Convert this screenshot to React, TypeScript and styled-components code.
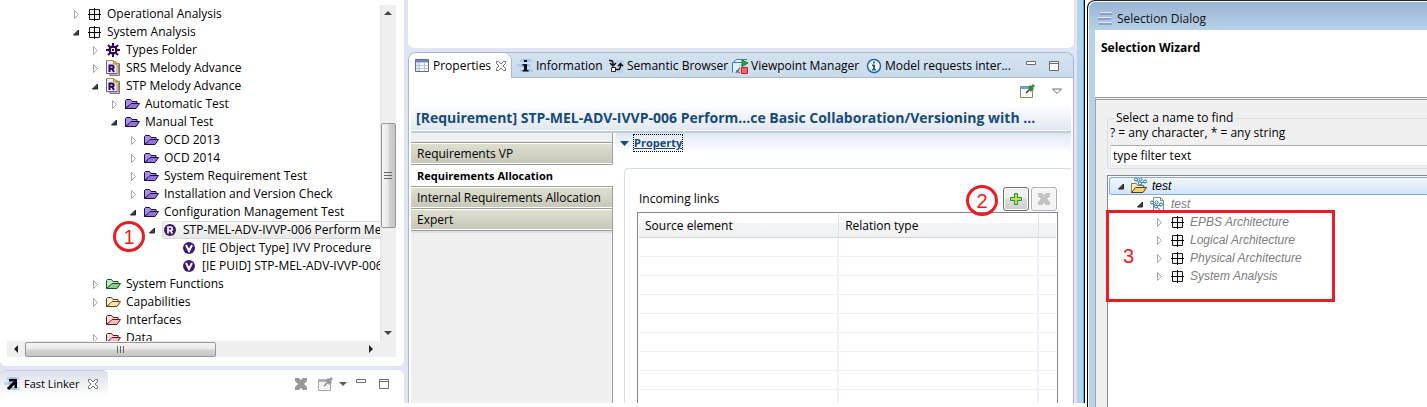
import React from "react";
import styled, { createGlobalStyle, css } from "styled-components";

const GlobalStyle = createGlobalStyle`
  *, *::before, *::after { box-sizing: border-box; }
  html, body { margin: 0; padding: 0; background: #fff; }
  body, button, input, table {
    font-family: "Open Sans", "Noto Sans", sans-serif;
    font-size: 12px;
    line-height: 18px;
    color: #000;
  }
  button { background: none; border: 0; padding: 0; margin: 0; }
  svg { display: block; flex: none; }
`;

const RED = "#ed1c24";
const LAVENDER = "#e0e5f5";

/* ---------- page frame ---------- */

const Page = styled.div`
  display: grid;
  grid-template-columns: minmax(0, 408fr) minmax(0, 679fr) minmax(0, 340fr);
  height: 100vh;
  overflow: hidden;
`;

const LeftColumn = styled.div`
  position: relative;
  display: flex;
  flex-direction: column;
  gap: 4px;
  min-height: 0;
  margin-bottom: 4px;
  padding-right: 4px;
  background: ${LAVENDER};
`;

const MiddleColumn = styled.div`
  display: flex;
  min-width: 0;
  min-height: 0;
  margin-bottom: 4px;
`;

const Workbench = styled.div`
  flex: 1;
  display: flex;
  flex-direction: column;
  gap: 4px;
  min-width: 0;
  min-height: 0;
  padding-right: 3px;
  background: ${LAVENDER};
`;

const WindowEdge = styled.div`
  flex: none;
  width: 10px;
  border-left: 6px solid #b9d1ea;
  background: linear-gradient(90deg, #35c3ea 1px, #000 1px 2px, #fff 2px);
`;

/* ---------- project tree ---------- */

const TreeCard = styled.section`
  flex: 1;
  display: flex;
  flex-direction: column;
  min-height: 0;
  padding: 5px 8px 9px 0;
  background: #fff;
  border-radius: 0 0 6px 6px;
`;

const TreeBody = styled.div`
  flex: 1;
  display: flex;
  min-height: 0;
`;

const TreeList = styled.ul`
  flex: 1;
  min-width: 0;
  min-height: 0;
  margin: 0;
  padding: 0;
  overflow: hidden;
  list-style: none;
`;

const TreeRow = styled.li<{ $level: number }>`
  display: flex;
  align-items: center;
  height: 18px;
  padding-left: ${(p) => 72 + p.$level * 19}px;
  white-space: nowrap;
`;

const Twisty = styled.button`
  flex: none;
  width: 14px;
  height: 16px;
`;

const NodeBody = styled.span<{ $selected?: boolean }>`
  flex: 1;
  display: flex;
  align-items: center;
  gap: 5px;
  height: 18px;
  ${(p) =>
    p.$selected &&
    css`
      box-shadow: inset 1px 0 #d9d9d9, inset 0 1px #d9d9d9, inset 0 -1px #d9d9d9;
      border-radius: 3px 0 0 3px;
      background: linear-gradient(#fafafa, #e6e6e6);
    `}
`;

const VScroll = styled.div`
  flex: none;
  display: flex;
  flex-direction: column;
  align-items: center;
  width: 16px;
  background: linear-gradient(90deg, #e4e4e4, #f0f0f0 3px);
`;

const VSpace = styled.div<{ $grow: number }>`
  flex: ${(p) => p.$grow} 1 0;
`;

const VThumb = styled.div`
  flex: 104 1 0;
  display: flex;
  align-items: center;
  justify-content: center;
  width: 15px;
  border: 1px solid #979797;
  border-radius: 2px;
  background: linear-gradient(90deg, #f5f5f5, #e9e9eb 45%, #d3d3d5 55%, #c5c5c8);
`;

const HScroll = styled.div`
  flex: none;
  display: flex;
  align-items: center;
  height: 16px;
  margin: 0 0 0 7px;
  padding-right: 16px;
  background: #f0f0f0;
`;

const HThumb = styled.div`
  flex: 191 1 0;
  display: flex;
  align-items: center;
  justify-content: center;
  height: 15px;
  border: 1px solid #979797;
  border-radius: 2px;
  background: linear-gradient(#f5f5f5, #e9e9eb 45%, #d3d3d5 55%, #c5c5c8);
`;

const HTrack = styled.div`
  flex: 147 1 0;
`;

const ScrollArrow = styled.button`
  flex: none;
  display: flex;
  align-items: center;
  justify-content: center;
  width: 18px;
  height: 16px;
`;

/* ---------- fast linker ---------- */

const LinkerCard = styled.section`
  flex: none;
  display: flex;
  align-items: flex-start;
  justify-content: space-between;
  height: 33px;
  background: #fff;
  border-radius: 6px 6px 0 0;
`;

const LinkerTab = styled.div`
  display: flex;
  align-items: center;
  gap: 4px;
  height: 27px;
  padding: 0 6px 0 4px;
  border-top: 1px solid #c9cddb;
  border-radius: 6px 6px 0 0;
  font-size: 11px;
  background: linear-gradient(#dde1ec, #fff);
`;

const LinkerTools = styled.div`
  display: flex;
  align-items: center;
  height: 27px;
  padding-right: 9px;
`;

const IconButton = styled.button<{ $w?: number }>`
  display: flex;
  align-items: center;
  justify-content: center;
  width: ${(p) => p.$w ?? 16}px;
  height: 16px;
`;

/* ---------- properties view ---------- */

const EditorStub = styled.div`
  flex: none;
  height: 48px;
  background: #fff;
  border-radius: 0 0 6px 6px;
`;

const Folder = styled.section`
  flex: 1;
  display: flex;
  flex-direction: column;
  min-height: 0;
  border: 1px solid #b0b5c8;
  border-bottom: 0;
  border-radius: 8px 8px 0 0;
  background: #fff;
  overflow: hidden;
`;

const TabBar = styled.div`
  flex: none;
  display: flex;
  height: 25px;
  background: linear-gradient(#d3e2f0, #c9dbeb);
  box-shadow: inset 0 -1px #b0b5c8;
`;

const ViewTab = styled.button<{ $active?: boolean; $w: number }>`
  flex: 0 1 ${(p) => p.$w}px;
  display: flex;
  align-items: center;
  gap: 3px;
  min-width: 0;
  height: 25px;
  padding-left: 5px;
  white-space: nowrap;
  text-align: left;
  ${(p) =>
    p.$active &&
    css`
      background: #fff;
      border-right: 1px solid #b0b5c8;
      border-radius: 0 8px 0 0;
    `}
`;

const TabTools = styled.div`
  display: flex;
  align-items: center;
  gap: 7px;
  margin-left: auto;
  padding-right: 11px;
  height: 25px;
`;

const ViewToolbar = styled.div`
  flex: none;
  display: flex;
  align-items: center;
  justify-content: flex-end;
  gap: 14px;
  height: 26px;
  padding-right: 8px;
`;

const TitleBar = styled.h1`
  flex: none;
  margin: 0 2px;
  padding-left: 5px;
  height: 27px;
  overflow: hidden;
  white-space: nowrap;
  font-size: 14px;
  font-weight: 700;
  line-height: 27px;
  color: #174a7c;
  background: linear-gradient(#fff, #e1e8f2);
  border-bottom: 1px solid #fff;
`;

const Content = styled.div`
  flex: 1;
  display: flex;
  min-height: 0;
  margin: 0 2px;
  border-top: 2px solid #b8cde0;
`;

const SideTabs = styled.nav`
  flex: none;
  display: flex;
  flex-direction: column;
  width: 202px;
  padding-top: 9px;
  background: linear-gradient(#9c9c9c, #9c9c9c) right / 1px 100% no-repeat #f0f0f0;
`;

const SideTab = styled.button<{ $active?: boolean }>`
  height: 22px;
  padding: 0 6px;
  text-align: left;
  white-space: nowrap;
  border-top: 1px solid #9c9c9c;
  border-right: 1px solid #9c9c9c;
  background: linear-gradient(#dfe0d0, #c6c7b8);
  background-clip: padding-box;
  box-shadow: inset 0 1px #fff, inset 0 -1px #fff;
  ${(p) =>
    p.$active &&
    css`
      background: #fff;
      border-right-color: #fff;
      font-size: 11px;
      font-weight: 700;
    `}
`;

const SideEnd = styled.div`
  height: 3px;
  margin-right: 1px;
  border-top: 1px solid #9c9c9c;
  background: #e0e0e0;
`;

const Pane = styled.div`
  flex: 1;
  display: flex;
  flex-direction: column;
  min-width: 0;
  padding-left: 2px;
`;

const SectionHead = styled.div`
  flex: none;
  display: flex;
  align-items: flex-start;
  height: 20px;
  padding: 2px 0 0 5px;
  border-radius: 4px 0 0 0;
  background: linear-gradient(#dfe8f2, #fff);
`;

const SectionToggle = styled.button`
  display: flex;
  align-items: center;
  gap: 5px;
  height: 16px;
`;

const SectionTitle = styled.span`
  height: 16px;
  line-height: 16px;
  font-size: 11px;
  font-weight: 700;
  color: #174a7c;
  text-decoration: underline;
  outline: 1px dotted #000;
`;

const LinksGroup = styled.div`
  flex: 1;
  display: flex;
  flex-direction: column;
  min-height: 0;
  margin: 15px 0 0 9px;
  padding: 18px 13px 0 12px;
  border: 1px solid #d5dfe8;
  border-width: 1px 0 0 1px;
  border-radius: 4px 0 0 0;
`;

const LinksHead = styled.div`
  position: relative;
  display: flex;
  align-items: center;
  gap: 2px;
  height: 25px;
  padding: 0 1px 1px 2px;
`;

const LinksLabel = styled.span`
  flex: 1;
  line-height: 24px;
  height: 24px;
`;

const PushButton = styled.button`
  display: flex;
  align-items: center;
  justify-content: center;
  width: 26px;
  height: 24px;
  border: 1px solid #707070;
  border-radius: 3px;
  background: linear-gradient(#f3f3f3, #ebebeb 50%, #dcdcdc 50%, #cfcfcf);
  box-shadow: inset 0 0 0 1px #fafafa;
  &:disabled {
    border-color: #adb2b5;
    background: #f4f4f4;
  }
`;

const TableFrame = styled.div`
  flex: 1;
  min-height: 0;
  overflow: hidden;
  padding: 1px 1px 0;
  border: 1px solid #828790;
  border-bottom: 0;
`;

const LinksTable = styled.table`
  width: 100%;
  border-collapse: separate;
  border-spacing: 0;
  table-layout: fixed;
  th {
    height: 24px;
    padding: 0 6px;
    text-align: left;
    font-weight: 400;
    background: linear-gradient(#fff 40%, #f3f4f6 40%, #f0f1f3);
    border-bottom: 1px solid #d5d5d5;
    border-right: 1px solid #dfe3e8;
  }
  td {
    height: 19px;
    padding: 0;
    border-bottom: 1px solid #f0f0f0;
    border-right: 2px solid #ebf2fb;
  }
  tr > :last-child { border-right: 0; }
`;

/* ---------- selection dialog ---------- */

const Dialog = styled.section`
  position: relative;
  display: flex;
  flex-direction: column;
  min-width: 0;
  min-height: 0;
  border-top: 1px solid #222;
  border-left: 1px solid #000;
  border-radius: 8px 0 0 0;
  background: #b9d1ea;
  box-shadow: inset 1px 1px #fff;
`;

const DialogTitle = styled.header`
  flex: none;
  display: flex;
  align-items: center;
  gap: 4px;
  height: 28px;
  margin: 1px 0 0 1px;
  padding: 6px 0 0 8px;
  border-radius: 7px 0 0 0;
  color: #111;
  background: linear-gradient(#98b3d2, #b9d1ea);
`;

const WizardHead = styled.h2`
  flex: none;
  height: 67px;
  margin: 0 0 0 7px;
  padding: 9px 6px;
  font-size: 12px;
  line-height: 18px;
  font-weight: 700;
  background: #fff;
`;

const DialogBody = styled.div`
  flex: 1;
  display: flex;
  flex-direction: column;
  min-height: 0;
  margin-left: 7px;
  padding: 11px 0 0 11px;
  border-top: 3px double #9c9ca4;
  border-left: 1px solid #a0a0a8;
  background: #f0f0f0;
`;

const FilterGroup = styled.fieldset`
  flex: none;
  min-width: 0;
  margin: 0 0 6px;
  padding: 0 0 2px 2px;
  border: 1px solid #d5dfe5;
  border-right: 0;
  border-radius: 4px 0 0 4px;
  legend {
    height: 14px;
    line-height: 14px;
    margin-left: 4px;
    padding: 0 2px;
  }
`;

const FilterHint = styled.label`
  display: block;
  height: 20px;
  line-height: 16px;
`;

const FilterInput = styled.input`
  display: block;
  width: 100%;
  height: 21px;
  padding: 0 2px;
  border: 1px solid #e2e9ef;
  border-top-color: #abadb3;
  border-right: 0;
  background: #fff;
`;

const ResultTree = styled.ul`
  flex: 1;
  min-height: 0;
  margin: 0;
  padding: 1px 0 0 1px;
  overflow: hidden;
  list-style: none;
  border: 1px solid #828790;
  border-width: 1px 0 0 1px;
  background: #fff;
`;

const ResultRow = styled.li<{ $level: number; $selected?: boolean; $muted?: boolean }>`
  display: flex;
  align-items: center;
  height: 18px;
  padding-left: ${(p) => 8 + p.$level * 19}px;
  white-space: nowrap;
  font-style: italic;
  font-family: "Liberation Sans", Arial, sans-serif;
  color: ${(p) => (p.$muted ? "#7d7d7d" : "#000")};
  ${(p) =>
    p.$selected &&
    css`
      border-radius: 3px 0 0 3px;
      background: linear-gradient(#f3f8fe, #cfe3fb);
      box-shadow: inset 1px 1px #84acdd, inset 0 -1px #84acdd;
    `}
`;

/* ---------- call-outs ---------- */

const Circle = styled.span<{ $x: string; $y: number }>`
  position: absolute;
  left: ${(p) => p.$x};
  top: ${(p) => p.$y}px;
  display: flex;
  align-items: center;
  justify-content: center;
  width: 32px;
  height: 31px;
  border: 3px solid ${RED};
  border-radius: 50%;
  font: 20px/24px "Liberation Sans", Arial, sans-serif;
  color: ${RED};
`;

const Frame = styled.div`
  position: absolute;
  left: 18px;
  top: 209px;
  width: 229px;
  height: 92px;
  padding: 31px 0 0 14px;
  border: 3px solid ${RED};
  font: 20px/24px "Liberation Sans", Arial, sans-serif;
  color: ${RED};
  pointer-events: none;
`;

/* ---------- icons ---------- */

const Svg = ({ w = 16, h = 16, children }: { w?: number; h?: number; children: React.ReactNode }) => (
  <svg width={w} height={h} viewBox={`0 0 ${w} ${h}`} aria-hidden="true">
    {children}
  </svg>
);

const Arrow = ({ open }: { open: boolean }) => (
  <Svg>
    {open ? (
      <path d="M6.500 6v5h-5z" fill="#404040" stroke="#222" />
    ) : (
      <path d="M2.500 4.500v8l4-4z" fill="#fff" stroke="#a6a6a6" />
    )}
  </Svg>
);

const ArchIcon = () => (
  <Svg>
    <path d="M3.500 3.500h10v10h-10z" fill="#f2f2f2" stroke="#1c1c1c" />
    <path d="M8.500 2v13M2 8.500h13" fill="none" stroke="#000" />
  </Svg>
);

const GearIcon = () => (
  <Svg>
    <g stroke="#2f0a5c" strokeWidth="2">
      <path d="M8 1v14M1 8h14M3 3l10 10M13 3L3 13" />
    </g>
    <circle cx="8" cy="8" r="4.600" fill="#2f0a5c" />
    <path d="M6.500 6.500h3v3h-3z" fill="none" stroke="#fff" />
  </Svg>
);

const ModuleIcon = () => (
  <Svg>
    <path d="M5 3.500h9.500v12H5z" fill="#efe8d8" stroke="#7b6fa5" />
    <path d="M3.500 2h8l2 2.500V14h-10z" fill="#f5eeda" stroke="#a58b52" />
    <path d="M1.500.5h7l3.500 3.500v9.500H1.500z" fill="#f0ecf8" stroke="#b5913a" />
    <path d="M1.500 1v12.500H12" fill="none" stroke="#6a5aa0" />
    <path d="M8.500.5v3.500H12z" fill="#f3c95a" stroke="#b5913a" />
    <path d="M4.500 12V5.500h2.500a1.500 1.500 0 0 1 0 3.300H5M7 8.800l2 3.200" fill="none" stroke="#2f0a5c" strokeWidth="2" />
  </Svg>
);

const folderColors = {
  purple: ["#9472d6", "#a98ee2", "#160a4a"],
  green: ["#8ccb8c", "#c3e8c3", "#1c4a22"],
  yellow: ["#f6e3a6", "#fbf3d4", "#5a4214"],
  red: ["#eec0c0", "#f8dede", "#6d0f14"],
};
type FolderColor = keyof typeof folderColors;

const FolderIcon = ({ color }: { color: FolderColor }) => {
  const [front, back, line] = folderColors[color];
  return (
    <Svg>
      <path d="M1.500 12.500v-8l1-1h4l1.500 2h5v2.500" fill={back} stroke={line} />
      <path d="M1.500 12.500L5 9.500l2-2h8.500l-3.500 5z" fill={front} stroke={line} />
    </Svg>
  );
};

const BallIcon = ({ kind }: { kind: "R" | "V" }) => (
  <Svg>
    <circle cx="8" cy="8" r="6" fill="#3f1a6e" />
    {kind === "R" ? (
      <path d="M6 11.500V5h2.500a1.700 1.700 0 0 1 0 3.500H6M8.500 8.500l1.800 3" fill="none" stroke="#fff" strokeWidth="1.600" />
    ) : (
      <path d="M5 5l3 6 3-6" fill="none" stroke="#fff" strokeWidth="2" />
    )}
  </Svg>
);

const CloseIcon = () => (
  <Svg w={12} h={12}>
    <path
      d="M1.500 1.500h2l2.500 2.500 2.500-2.500h2v2L8 6l2.500 2.500v2h-2L6 8l-2.500 2.500h-2v-2L4 6 1.500 3.500z"
      fill="#fff"
      stroke="#6f6f6f"
    />
  </Svg>
);

const CrossIcon = ({ color }: { color: string }) => (
  <Svg w={14} h={14}>
    <path d="M1 1h4l2 2 2-2h4v3l-3 3 3 3v3H9l-2-2-2 2H1v-3l3-3-3-3z" fill={color} />
  </Svg>
);

const Stripes = () => (
  <>
    <path d="M3 2.500h12M0 7.500h14M3 12.500h13" stroke="#9fc0ee" strokeWidth="3" opacity=".55" />
    <path d="M6 2.500h6M4 7.500h8M7 12.500h6" stroke="#6f9fe4" strokeWidth="2" opacity=".5" />
  </>
);

const LinkerIcon = () => (
  <Svg>
    <Stripes />
    <path d="M4 13l7-7" stroke="#000" strokeWidth="3" />
    <path d="M5 3h8v9h-2.500V5.500H5z" fill="#000" />
  </Svg>
);

const InfoBarsIcon = () => (
  <Svg>
    <Stripes />
    <path d="M7 2h3v2H7zM5.500 6H10v6h1.500v1.500h-6V12H7V7.500H5.500z" fill="#111" />
  </Svg>
);

const SemanticIcon = () => (
  <Svg>
    <path d="M8 3.500h8M9 8.500h7M9 13.500h6" stroke="#a9c6f0" strokeWidth="2.500" opacity=".7" />
    <path d="M1 2.500c4-.5 4 1 4 4M2 5l3 3 3-3" fill="none" stroke="#111" strokeWidth="1.500" />
    <path d="M8 11.500h2.500c1.500 0 2-1 2-5M10 8l2.500-2.500L15 8" fill="none" stroke="#111" strokeWidth="1.500" />
    <path d="M3.500 9.500h4v4h-4z" fill="#fff" stroke="#222" />
  </Svg>
);

const ViewpointIcon = () => (
  <Svg>
    <path d="M1 5l4-3h8v4H7v8H1z" fill="#e4f1fa" />
    <path d="M.5 14.500V5l4-3.500H15M.5 4.500h9" fill="none" stroke="#2f7fbf" />
    <path d="M10 2l6 3-6 3.500z" fill="#2fa43a" stroke="#1b7a26" />
    <path d="M9.500 9.500h6v6h-6z" fill="#ee6666" stroke="#c22323" />
    <path d="M4 15l4-5M4 12.500l4 2.500" stroke="#777" strokeWidth="1.500" />
  </Svg>
);

const InfoIcon = () => (
  <Svg>
    <circle cx="8" cy="8" r="6.500" fill="#fff" stroke="#1c68a8" strokeWidth="1.500" />
    <path d="M7 3.500h2v2H7zM6 6.500h3v4.500h1v1.500H6V11h1V8H6z" fill="#1c5f9c" />
  </Svg>
);

const TableIcon = () => (
  <Svg>
    <path d="M1.500 1.500h13v12h-13z" fill="#fff" stroke="#5a6f94" />
    <path d="M2 2h12v2.500H2z" fill="#6f86ae" />
    <path d="M2 5h3.500v8H2z" fill="#dce4f2" />
    <path d="M2 7.500h12M2 10.500h12M5.500 4.500V13M10.500 4.500V13" stroke="#b9c3d8" />
  </Svg>
);

const MinIcon = () => (
  <Svg w={12} h={12}>
    <path d="M1.500 1.500h9v3h-9z" fill="#fff" stroke="#6b6b6b" />
  </Svg>
);

const MaxIcon = () => (
  <Svg w={12} h={12}>
    <path d="M1.500 1.500h9v9h-9zM1 3.500h10" fill="#fff" stroke="#6b6b6b" />
  </Svg>
);

const PinIcon = ({ muted }: { muted?: boolean }) => (
  <Svg>
    <path d="M1.500 3.500h12v11h-12z" fill={muted ? "#f4f4f4" : "#fffef4"} stroke={muted ? "#a5a5a5" : "#93875d"} />
    <path d="M1 3h9v3H1z" fill={muted ? "#b0b0b0" : "#6d9fe0"} />
    <path d="M7 10l4-4" stroke={muted ? "#888" : "#333"} strokeWidth="1.500" />
    <path d="M9 4l2-2 1 1 2-2 2 2-2 2 1 1-3 3z" fill={muted ? "#999" : "#2f8f3f"} />
  </Svg>
);

const PlusIcon = () => (
  <Svg w={14} h={14}>
    <path d="M5.500 1.500h3v4h4v3h-4v4h-3v-4h-4v-3h4z" fill="#c5dc4c" stroke="#2f8a4c" />
  </Svg>
);

const dots = (
  <g fill="#fff" stroke="#1d6fa8">
    <path d="M3 2.500l4 4 5-2M7 6.500l4 3" fill="none" />
    <circle cx="3" cy="2.500" r="1.500" />
    <circle cx="7" cy="6.500" r="1.500" />
    <circle cx="7.500" cy="2.500" r="1.500" />
    <circle cx="12" cy="4.500" r="1.500" />
  </g>
);

const ProjectIcon = () => (
  <Svg>
    <path d="M.5 14.500V5.500h5l1 2H13v2" fill="#fdf0c0" stroke="#9a7a20" />
    <path d="M.5 14.500l4-5h11l-3.500 5z" fill="#f4cf6a" stroke="#4a3a10" />
    <g transform="translate(2 -1)">{dots}</g>
  </Svg>
);

const ModelIcon = () => (
  <Svg>
    <path d="M3.500 1.500h7l3 3v10h-10z" fill="#fff" stroke="#8a8a8a" />
    <path d="M10.500 1.500v3h3" fill="none" stroke="#8a8a8a" />
    <g transform="translate(-1 4)">{dots}</g>
  </Svg>
);

const DialogIcon = () => (
  <Svg>
    <path d="M3 2.500h12M1 7.500h13M2 12.500h13" stroke="#dfe7f6" strokeWidth="3" />
    <path d="M3 3h12M1 8h13M2 13h13" stroke="#7a8cb8" strokeWidth="2" opacity=".8" />
  </Svg>
);

/* ---------- data ---------- */

type Node = {
  label: string;
  level: number;
  icon: React.ReactNode;
  open?: boolean;
  selected?: boolean;
};

const folder = (color: FolderColor) => <FolderIcon color={color} />;

const nodes: Node[] = [
  { label: "Operational Analysis", level: 0, icon: <ArchIcon />, open: false },
  { label: "System Analysis", level: 0, icon: <ArchIcon />, open: true },
  { label: "Types Folder", level: 1, icon: <GearIcon />, open: false },
  { label: "SRS Melody Advance", level: 1, icon: <ModuleIcon />, open: false },
  { label: "STP Melody Advance", level: 1, icon: <ModuleIcon />, open: true },
  { label: "Automatic Test", level: 2, icon: folder("purple"), open: false },
  { label: "Manual Test", level: 2, icon: folder("purple"), open: true },
  { label: "OCD 2013", level: 3, icon: folder("purple"), open: false },
  { label: "OCD 2014", level: 3, icon: folder("purple"), open: false },
  { label: "System Requirement Test", level: 3, icon: folder("purple"), open: false },
  { label: "Installation and Version Check", level: 3, icon: folder("purple"), open: false },
  { label: "Configuration Management Test", level: 3, icon: folder("purple"), open: true },
  { label: "STP-MEL-ADV-IVVP-006 Perform Mel", level: 4, icon: <BallIcon kind="R" />, open: true, selected: true },
  { label: "[IE Object Type] IVV Procedure", level: 5, icon: <BallIcon kind="V" /> },
  { label: "[IE PUID] STP-MEL-ADV-IVVP-006", level: 5, icon: <BallIcon kind="V" /> },
  { label: "System Functions", level: 1, icon: folder("green"), open: false },
  { label: "Capabilities", level: 1, icon: folder("yellow"), open: false },
  { label: "Interfaces", level: 1, icon: folder("red") },
  { label: "Data", level: 1, icon: folder("red"), open: false },
];

const results: Node[] = [
  { label: "test", level: 0, icon: <ProjectIcon />, open: true, selected: true },
  { label: "test", level: 1, icon: <ModelIcon />, open: true },
  { label: "EPBS Architecture", level: 2, icon: <ArchIcon />, open: false },
  { label: "Logical Architecture", level: 2, icon: <ArchIcon />, open: false },
  { label: "Physical Architecture", level: 2, icon: <ArchIcon />, open: false },
  { label: "System Analysis", level: 2, icon: <ArchIcon />, open: false },
];

const viewTabs = [
  { label: "Properties", icon: <TableIcon />, w: 103, active: true },
  { label: "Information", icon: <InfoBarsIcon />, w: 91 },
  { label: "Semantic Browser", icon: <SemanticIcon />, w: 124 },
  { label: "Viewpoint Manager", icon: <ViewpointIcon />, w: 134 },
  { label: "Model requests inter...", icon: <InfoIcon />, w: 150 },
];

const sideTabs = ["Requirements VP", "Requirements Allocation", "Internal Requirements Allocation", "Expert"];

const NodeTwisty = ({ open }: { open?: boolean }) =>
  open === undefined ? (
    <Twisty as="span" />
  ) : (
    <Twisty aria-label={open ? "Collapse" : "Expand"}>
      <Arrow open={open} />
    </Twisty>
  );

/* ---------- parts ---------- */

const ProjectTree = () => (
  <TreeCard>
    <TreeBody>
      <TreeList role="tree" aria-label="Project">
        {nodes.map((n) => (
          <TreeRow key={n.label} $level={n.level} role="treeitem" aria-selected={!!n.selected}>
            <NodeTwisty open={n.open} />
            <NodeBody $selected={n.selected}>
              {n.icon}
              {n.label}
            </NodeBody>
          </TreeRow>
        ))}
      </TreeList>
      <VScroll>
        <ScrollArrow aria-label="Scroll up">
          <Svg w={8} h={4}><path d="M0 4l4-4 4 4z" fill="#444" /></Svg>
        </ScrollArrow>
        <VSpace $grow={102} />
        <VThumb>
          <Svg w={8} h={9}><path d="M0 1.500h8M0 4.500h8M0 7.500h8" stroke="#666" /></Svg>
        </VThumb>
        <VSpace $grow={97} />
        <ScrollArrow aria-label="Scroll down">
          <Svg w={8} h={4}><path d="M0 0l4 4 4-4z" fill="#444" /></Svg>
        </ScrollArrow>
      </VScroll>
    </TreeBody>
    <HScroll>
      <ScrollArrow aria-label="Scroll left">
        <Svg w={4} h={8}><path d="M4 0L0 4l4 4z" fill="#222" /></Svg>
      </ScrollArrow>
      <HThumb>
        <Svg w={9} h={7}><path d="M1.500 0v7M4.500 0v7M7.500 0v7" stroke="#666" /></Svg>
      </HThumb>
      <HTrack />
      <ScrollArrow aria-label="Scroll right">
        <Svg w={4} h={8}><path d="M0 0l4 4-4 4z" fill="#222" /></Svg>
      </ScrollArrow>
    </HScroll>
  </TreeCard>
);

const FastLinker = () => (
  <LinkerCard>
    <LinkerTab>
      <LinkerIcon />
      Fast Linker
      <IconButton $w={18} aria-label="Close Fast Linker"><CloseIcon /></IconButton>
    </LinkerTab>
    <LinkerTools>
      <IconButton $w={24} aria-label="Clear"><CrossIcon color="#989898" /></IconButton>
      <IconButton $w={24} aria-label="Pin"><PinIcon muted /></IconButton>
      <IconButton $w={12} aria-label="Menu">
        <Svg w={8} h={4}><path d="M0 0h8L4 4z" fill="#5c5c5c" /></Svg>
      </IconButton>
      <IconButton $w={24} aria-label="Minimize"><MinIcon /></IconButton>
      <IconButton $w={22} aria-label="Maximize"><MaxIcon /></IconButton>
    </LinkerTools>
  </LinkerCard>
);

const PropertiesView = () => (
  <Folder>
    <TabBar role="tablist">
      {viewTabs.map((t) => (
        <ViewTab key={t.label} role="tab" aria-selected={!!t.active} $active={t.active} $w={t.w}>
          {t.icon}
          {t.label}
          {t.active && <IconButton as="span" $w={14}><CloseIcon /></IconButton>}
        </ViewTab>
      ))}
      <TabTools>
        <IconButton aria-label="Minimize"><MinIcon /></IconButton>
        <IconButton aria-label="Maximize"><MaxIcon /></IconButton>
      </TabTools>
    </TabBar>
    <ViewToolbar>
      <IconButton aria-label="Pin view"><PinIcon /></IconButton>
      <IconButton aria-label="View menu">
        <Svg w={12} h={7}><path d="M1.500 1h9L6 5.500z" fill="#fff" stroke="#666" /></Svg>
      </IconButton>
    </ViewToolbar>
    <TitleBar>
      [Requirement] STP-MEL-ADV-IVVP-006 Perform...ce Basic Collaboration/Versioning with ...
    </TitleBar>
    <Content>
      <SideTabs>
        {sideTabs.map((label, i) => (
          <SideTab key={label} $active={i === 1}>{label}</SideTab>
        ))}
        <SideEnd />
      </SideTabs>
      <Pane>
        <SectionHead>
          <SectionToggle aria-expanded="true">
            <Svg w={9} h={5}><path d="M0 0h9L4.500 5z" fill="#174a7c" /></Svg>
            <SectionTitle>Property</SectionTitle>
          </SectionToggle>
        </SectionHead>
        <LinksGroup>
          <LinksHead>
            <LinksLabel>Incoming links</LinksLabel>
            <PushButton aria-label="Add link"><PlusIcon /></PushButton>
            <PushButton aria-label="Remove link" disabled><CrossIcon color="#c3c3c3" /></PushButton>
            <Circle $x="calc(100% - 92px)" $y={-2}>2</Circle>
          </LinksHead>
          <TableFrame>
            <LinksTable>
              <colgroup>
                <col style={{ width: "48%" }} />
                <col style={{ width: "48%" }} />
                <col />
              </colgroup>
              <thead>
                <tr><th>Source element</th><th>Relation type</th><th /></tr>
              </thead>
              <tbody>
                {Array.from({ length: 9 }, (_, i) => (
                  <tr key={i}><td /><td /><td /></tr>
                ))}
              </tbody>
            </LinksTable>
          </TableFrame>
        </LinksGroup>
      </Pane>
    </Content>
  </Folder>
);

const SelectionDialog = () => (
  <Dialog role="dialog" aria-label="Selection Dialog">
    <DialogTitle>
      <DialogIcon />
      Selection Dialog
    </DialogTitle>
    <WizardHead>Selection Wizard</WizardHead>
    <DialogBody>
      <FilterGroup>
        <legend>Select a name to find</legend>
        <FilterHint htmlFor="filter">? = any character, * = any string</FilterHint>
        <FilterInput id="filter" defaultValue="type filter text" />
      </FilterGroup>
      <ResultTree role="tree" aria-label="Results">
        {results.map((n, i) => (
          <ResultRow key={i} $level={n.level} $selected={n.selected} $muted={i > 0} role="treeitem">
            <NodeTwisty open={n.open} />
            <NodeBody>
              {n.icon}
              {n.label}
            </NodeBody>
          </ResultRow>
        ))}
      </ResultTree>
    </DialogBody>
    <Frame>3</Frame>
  </Dialog>
);

export default function App() {
  return (
    <>
      <GlobalStyle />
      <Page>
        <LeftColumn>
          <ProjectTree />
          <FastLinker />
          <Circle $x="113px" $y={221}>1</Circle>
        </LeftColumn>
        <MiddleColumn>
          <Workbench>
            <EditorStub />
            <PropertiesView />
          </Workbench>
          <WindowEdge />
        </MiddleColumn>
        <SelectionDialog />
      </Page>
    </>
  );
}
